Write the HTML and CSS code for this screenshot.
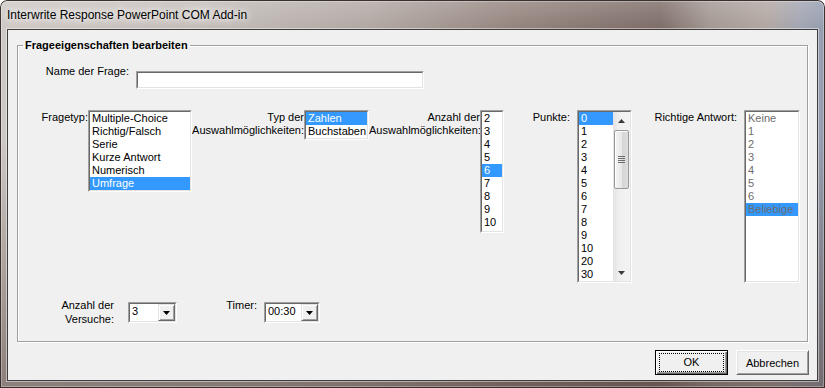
FILE: index.html
```html
<!DOCTYPE html>
<html lang="de">
<head>
    <meta charset="UTF-8">
    <title>Interwrite Response PowerPoint COM Add-in</title>
    <link rel="stylesheet" href="styles.css">
</head>
<body>
<div class="window">
    <div class="titlebar"><span class="title">Interwrite Response PowerPoint COM Add-in</span></div>
    <div class="client">
        <fieldset class="group">
            <legend>Frageeigenschaften bearbeiten</legend>

            <div class="name-row">
                <label class="lbl name-lbl" for="qname">Name der Frage:</label>
                <div class="textbox"><input id="qname" type="text"></div>
            </div>

            <div class="lists-row">
                <div class="field">
                    <span class="lbl w-type">Fragetyp:</span>
                    <div class="listbox lb-type">
                        <ul>
                            <li>Multiple-Choice</li>
                            <li>Richtig/Falsch</li>
                            <li>Serie</li>
                            <li>Kurze Antwort</li>
                            <li>Numerisch</li>
                            <li class="sel">Umfrage</li>
                        </ul>
                    </div>
                </div>
                <div class="field">
                    <span class="lbl w-kind">Typ der<br>Auswahlmöglichkeiten:</span>
                    <div class="listbox lb-kind">
                        <ul>
                            <li class="sel">Zahlen</li>
                            <li>Buchstaben</li>
                        </ul>
                    </div>
                </div>
                <div class="field">
                    <span class="lbl w-count">Anzahl der<br>Auswahlmöglichkeiten:</span>
                    <div class="listbox lb-count">
                        <ul>
                            <li>2</li>
                            <li>3</li>
                            <li>4</li>
                            <li>5</li>
                            <li class="sel">6</li>
                            <li>7</li>
                            <li>8</li>
                            <li>9</li>
                            <li>10</li>
                        </ul>
                    </div>
                </div>
                <div class="field">
                    <span class="lbl w-points">Punkte:</span>
                    <div class="listbox lb-points">
                        <div class="scroll-wrap">
                            <ul>
                                <li class="sel">0</li>
                                <li>1</li>
                                <li>2</li>
                                <li>3</li>
                                <li>4</li>
                                <li>5</li>
                                <li>6</li>
                                <li>7</li>
                                <li>8</li>
                                <li>9</li>
                                <li>10</li>
                                <li>20</li>
                                <li>30</li>
                            </ul>
                            <div class="vscroll">
                                <div class="sb-btn">
                                    <svg width="7" height="4" viewBox="0 0 7 4"><polygon points="3.5,0 7,4 0,4" fill="#3b3b3b"/></svg>
                                </div>
                                <div class="sb-track">
                                    <div class="thumb">
                                        <svg width="7" height="8" viewBox="0 0 7 8">
                                            <rect x="0" y="0" width="7" height="1" fill="#6e6e6e"/>
                                            <rect x="0" y="2" width="7" height="1" fill="#6e6e6e"/>
                                            <rect x="0" y="4" width="7" height="1" fill="#6e6e6e"/>
                                            <rect x="0" y="6" width="7" height="1" fill="#6e6e6e"/>
                                        </svg>
                                    </div>
                                </div>
                                <div class="sb-btn">
                                    <svg width="7" height="4" viewBox="0 0 7 4"><polygon points="0,0 7,0 3.5,4" fill="#3b3b3b"/></svg>
                                </div>
                            </div>
                        </div>
                    </div>
                </div>
                <div class="field">
                    <span class="lbl w-answer">Richtige Antwort:</span>
                    <div class="listbox lb-answer disabled">
                        <ul>
                            <li>Keine</li>
                            <li>1</li>
                            <li>2</li>
                            <li>3</li>
                            <li>4</li>
                            <li>5</li>
                            <li>6</li>
                            <li class="sel">Beliebige</li>
                        </ul>
                    </div>
                </div>
            </div>

            <div class="combo-row">
                <span class="lbl tries-lbl">Anzahl der<br>Versuche:</span>
                <div class="combo combo-tries">
                    <div class="combo-in">
                        <span class="combo-val">3</span>
                        <span class="drop"><svg width="7" height="4" viewBox="0 0 7 4"><polygon points="0,0 7,0 3.5,4" fill="#000"/></svg></span>
                    </div>
                </div>
                <span class="lbl timer-lbl">Timer:</span>
                <div class="combo combo-timer">
                    <div class="combo-in">
                        <span class="combo-val">00:30</span>
                        <span class="drop"><svg width="7" height="4" viewBox="0 0 7 4"><polygon points="0,0 7,0 3.5,4" fill="#000"/></svg></span>
                    </div>
                </div>
            </div>
        </fieldset>

        <div class="buttons">
            <button class="btn default"><span>OK</span></button>
            <button class="btn">Abbrechen</button>
        </div>
    </div>
</div>
</body>
</html>
```

FILE: styles.css
```css
* {
    box-sizing: border-box;
}

body {
    margin: 0;
    width: 825px;
    height: 388px;
    overflow: hidden;
    font-family: "Liberation Sans", Arial, sans-serif;
    font-size: 11px;
    color: #000;
    background: #fff;
}

/* window frame (aero glass) */
.window {
    height: 388px;
    display: flex;
    flex-direction: column;
    padding: 0 7px 7px 7px;
    border-radius: 7px 7px 0 0;
    background:
        linear-gradient(to bottom, rgba(255, 255, 255, 0.18), rgba(255, 255, 255, 0) 28px),
        linear-gradient(to bottom, rgba(0, 0, 0, 0) 35%, rgba(85, 65, 60, 0.55) 100%),
        linear-gradient(to right, #cfc9c5 0%, #c3bcb8 25%, #b1a8a3 45%, #95857f 62%, #85746f 74%, #7e6d68 80%, #a39893 86%, #b2a7a2 93%, #a2a5b2 97%, #959db0 100%);
    box-shadow: inset 0 0 0 1px #3a302d, inset 0 0 0 2px rgba(255, 255, 255, 0.3);
}

.titlebar {
    height: 29px;
    padding-top: 8px;
    line-height: 15px;
    font-size: 12px;
    white-space: nowrap;
}

.title {
    color: #000;
    text-shadow: 0 0 6px #fff, 0 0 10px rgba(255, 255, 255, 0.9), 0 0 16px rgba(255, 255, 255, 0.8);
}

.client {
    flex: 1;
    display: flex;
    flex-direction: column;
    background: #f0f0f0;
    border: 1px solid #3d3d3d;
    box-shadow: 0 0 0 1px rgba(255, 255, 255, 0.45);
}

/* group box */
.group {
    margin: 9px 9px 0 9px;
    padding: 0;
    height: 303px;
    min-width: 0;
    border: 1px solid #a0a0a0;
    box-shadow: inset 1px 1px 0 #fff, 1px 1px 0 #fff;
}

.group legend {
    margin-left: 5px;
    padding: 0 2px;
    font-weight: bold;
    line-height: 13px;
}

.lbl {
    line-height: 13px;
    text-align: right;
    white-space: nowrap;
}

.name-row {
    display: flex;
    align-items: flex-start;
    margin-top: 19px;
}

.name-lbl {
    width: 111px;
    margin-top: -6px;
}

.textbox {
    width: 288px;
    height: 18px;
    margin-left: 7px;
    background: #fff;
    border: 1px solid;
    border-color: #a0a0a0 #fff #fff #a0a0a0;
}

.textbox input {
    width: 100%;
    height: 100%;
    margin: 0;
    border: 1px solid;
    border-color: #696969 #e3e3e3 #e3e3e3 #696969;
    font: inherit;
    outline: none;
}

/* list boxes */
.lists-row {
    display: flex;
    align-items: flex-start;
    margin-top: 21px;
}

.field {
    display: flex;
    align-items: flex-start;
}

.field .lbl {
    padding-top: 1px;
}

.w-type { width: 70px; }
.w-kind { width: 112px; }
.w-count { width: 111px; }
.w-points { width: 66px; margin-right: 7px; }
.w-answer { width: 105px; margin-right: 7px; }

.listbox {
    background: #fff;
    border: 1px solid;
    border-color: #a0a0a0 #fff #fff #a0a0a0;
}

.listbox ul,
.scroll-wrap {
    height: 100%;
    margin: 0;
    padding: 0;
    list-style: none;
    overflow: hidden;
    border: 1px solid;
    border-color: #696969 #e3e3e3 #e3e3e3 #696969;
}

.scroll-wrap {
    display: flex;
}

.scroll-wrap ul {
    flex: 1;
    border: 0;
}

.listbox li {
    line-height: 13px;
    height: 13px;
    padding-left: 2px;
    white-space: nowrap;
}

.listbox li.sel {
    background: #3399ff;
    color: #fff;
}

.listbox.disabled li,
.listbox.disabled li.sel {
    color: #6d6d6d;
}

.lb-type { width: 104px; height: 82px; }
.lb-kind { width: 65px; height: 30px; }
.lb-count { width: 24px; height: 123px; }
.lb-points { width: 55px; height: 173px; }
.lb-answer { width: 56px; height: 173px; }

/* vertical scrollbar */
.vscroll {
    width: 17px;
    display: flex;
    flex-direction: column;
    background: linear-gradient(to right, #e3e3e3, #f0f0f0 40%, #f3f3f3);
}

.sb-btn {
    height: 17px;
    display: flex;
    align-items: center;
    justify-content: center;
}

.sb-track {
    flex: 1;
    padding-top: 1px;
}

.thumb {
    height: 59px;
    margin: 0 1px;
    border: 1px solid #989898;
    border-radius: 2px;
    background: linear-gradient(to right, #f4f4f4, #e8e8e8 50%, #d6d6d6 52%, #dcdcdc);
    box-shadow: inset 1px 1px 0 #fff;
    display: flex;
    align-items: center;
    justify-content: center;
}

/* combo boxes */
.combo-row {
    display: flex;
    align-items: flex-start;
    margin-top: 15px;
}

.tries-lbl {
    width: 96px;
    line-height: 14px;
}

.timer-lbl {
    width: 80px;
    margin-top: 1px;
}

.combo {
    height: 21px;
    margin-top: 4px;
    background: #fff;
    border: 1px solid;
    border-color: #a0a0a0 #fff #fff #a0a0a0;
}

.combo-tries { width: 49px; margin-left: 14px; }
.combo-timer { width: 56px; margin-left: 7px; }

.combo-in {
    height: 100%;
    display: flex;
    border: 1px solid;
    border-color: #696969 #e3e3e3 #e3e3e3 #696969;
}

.combo-val {
    flex: 1;
    padding-left: 2px;
    line-height: 15px;
}

.drop {
    width: 17px;
    display: flex;
    align-items: center;
    justify-content: center;
    background: #f0f0f0;
    border: 1px solid;
    border-color: #e3e3e3 #696969 #696969 #e3e3e3;
    box-shadow: inset 1px 1px 0 #fff, inset -1px -1px 0 #a0a0a0;
}

/* dialog buttons */
.buttons {
    display: flex;
    justify-content: flex-end;
    gap: 8px;
    margin: 8px 8px 0 0;
}

.btn {
    width: 73px;
    height: 25px;
    padding: 0;
    font: inherit;
    color: #000;
    background: #f0f0f0;
    border: 1px solid;
    border-color: #fff #696969 #696969 #fff;
    box-shadow: inset 1px 1px 0 #e3e3e3, inset -1px -1px 0 #a0a0a0;
}

.btn.default {
    border-color: #000;
    box-shadow: inset 1px 1px 0 #fff, inset -1px -1px 0 #696969, inset -2px -2px 0 #a0a0a0;
}

.btn.default span {
    display: block;
    height: 19px;
    margin: 0 3px;
    line-height: 17px;
    border: 1px dotted #000;
}
```
